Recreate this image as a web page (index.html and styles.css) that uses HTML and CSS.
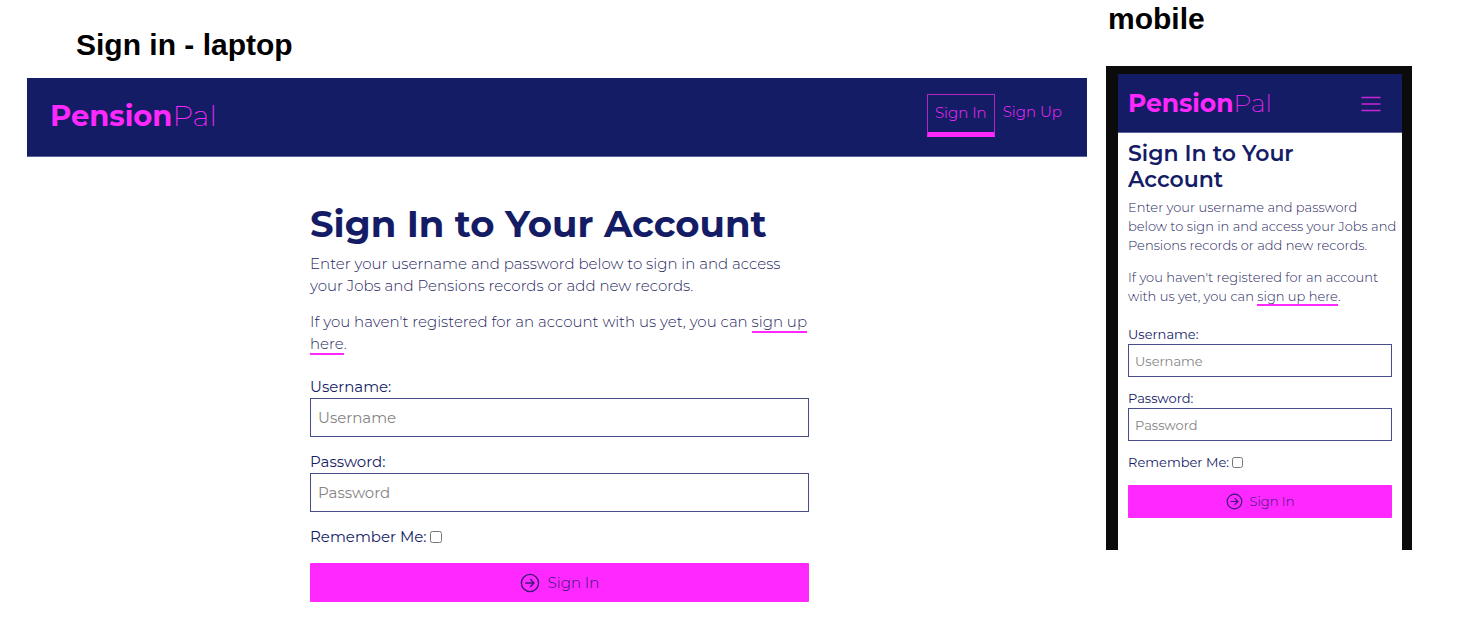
FILE: index.html
```html
<!DOCTYPE html>
<html lang="en">
<head>
<meta charset="utf-8">
<title>PensionPal – Sign In</title>
<link rel="stylesheet" href="styles.css">
</head>
<body>
<div class="board">
  <section class="laptop">
    <h2 class="caption">Sign in - laptop</h2>
    <header class="topbar">
      <a class="brand" href="#"><strong>Pension</strong><span>Pal</span></a>
      <nav class="nav">
        <a class="nav-link active" href="#">Sign In</a>
        <a class="nav-link" href="#">Sign Up</a>
      </nav>
    </header>
    <main class="content">
      <form class="form">
        <h1 class="title">Sign In to Your Account</h1>
        <p class="copy">Enter your username and password below to sign in and access your Jobs and Pensions records or add new records.</p>
        <p class="copy">If you haven't registered for an account with us yet, you can <a class="link" href="#">sign up here</a>.</p>
        <div class="field">
          <label for="l-user">Username:</label>
          <input class="input" id="l-user" type="text" placeholder="Username">
        </div>
        <div class="field">
          <label for="l-pass">Password:</label>
          <input class="input" id="l-pass" type="password" placeholder="Password">
        </div>
        <div class="remember">
          <label for="l-rem">Remember Me:</label>
          <input class="check" id="l-rem" type="checkbox">
        </div>
        <button class="submit" type="submit">
          <svg class="arrow" viewBox="0 0 20 20" aria-hidden="true"><circle cx="10" cy="10" r="8.6"/><path d="M5.8 10h8.2M10.6 6.6 14 10l-3.4 3.4"/></svg>
          Sign In
        </button>
      </form>
    </main>
  </section>
  <section class="mobile">
    <h2 class="caption">mobile</h2>
    <div class="device">
      <div class="screen">
        <header class="topbar">
          <a class="brand" href="#"><strong>Pension</strong><span>Pal</span></a>
          <button class="menu" type="button" aria-label="Menu">
            <svg viewBox="0 0 20 16" aria-hidden="true"><path d="M.5 1.5h19M.5 8h19M.5 14.5h19"/></svg>
          </button>
        </header>
        <form class="form">
          <h1 class="title">Sign In to Your Account</h1>
          <p class="copy">Enter your username and password below to sign in and access your Jobs and Pensions records or add new records.</p>
          <p class="copy">If you haven't registered for an account with us yet, you can <a class="link" href="#">sign up here</a>.</p>
          <div class="field">
            <label for="m-user">Username:</label>
            <input class="input" id="m-user" type="text" placeholder="Username">
          </div>
          <div class="field">
            <label for="m-pass">Password:</label>
            <input class="input" id="m-pass" type="password" placeholder="Password">
          </div>
          <div class="remember">
            <label for="m-rem">Remember Me:</label>
            <input class="check" id="m-rem" type="checkbox">
          </div>
          <button class="submit" type="submit">
            <svg class="arrow" viewBox="0 0 20 20" aria-hidden="true"><circle cx="10" cy="10" r="8.6"/><path d="M5.8 10h8.2M10.6 6.6 14 10l-3.4 3.4"/></svg>
            Sign In
          </button>
        </form>
      </div>
    </div>
  </section>
</div>
</body>
</html>
```

FILE: styles.css
```css
:root {
  --navy: #151c66;
  --pink: #ff28ff;
}

* {
  box-sizing: border-box;
}

body {
  margin: 0;
  background: #fff;
  color: var(--navy);
  font-family: Montserrat, Inter, sans-serif;
}

h1, h2, p {
  margin: 0;
}

a {
  color: inherit;
  text-decoration: none;
}

.board {
  display: grid;
  grid-template-columns: 1060fr 306fr;
  column-gap: 19px;
  align-items: start;
  padding: 0 56px 0 27px;
}

.caption {
  color: #000;
  font: bold 30px/36px "Liberation Sans", Arial, sans-serif;
}

.topbar {
  display: flex;
  justify-content: space-between;
  background: var(--navy);
  color: var(--pink);
}

.brand strong {
  font-weight: 700;
}

.brand span {
  font-weight: 200;
}

.nav {
  display: flex;
  align-items: flex-start;
  font-size: 15px;
  font-weight: 300;
  line-height: 20px;
}

.nav-link {
  padding: 8px;
}

.nav-link.active {
  border: 1px solid #b524c4;
  border-bottom: 5px solid var(--pink);
  padding: 8px 7px 9px;
}

.form {
  display: flex;
  flex-direction: column;
}

.copy {
  color: #1f2760;
  font-weight: 300;
}

.link {
  border-bottom: 2px solid var(--pink);
}

.field {
  display: flex;
  flex-direction: column;
}

.input {
  width: 100%;
  border: 1px solid #474d8a;
  border-radius: 0;
  background: #fff;
  color: var(--navy);
  font: inherit;
}

.input::placeholder {
  color: #858585;
  opacity: 1;
}

.remember {
  display: flex;
  align-items: center;
  gap: 3px;
}

.check {
  margin: 0;
}

.submit {
  display: flex;
  align-items: center;
  justify-content: center;
  border: 0;
  border-radius: 1px;
  padding: 0;
  background: var(--pink);
  color: #2b1a70;
  font: inherit;
  font-weight: 300;
}

.arrow {
  fill: none;
  stroke: #3b1a78;
  stroke-width: 1.4;
  stroke-linecap: round;
  stroke-linejoin: round;
}

.laptop .caption {
  padding: 27px 0 15px 49px;
}

.laptop .topbar {
  padding: 16px 17px 18px 23px;
  border-bottom: 1px solid #5c6196;
}

.laptop .brand {
  font-size: 29px;
  line-height: 44px;
}

.laptop .content {
  display: grid;
  grid-template-columns: 283fr 499fr 278fr;
  padding-top: 43px;
}

.laptop .form {
  grid-column: 2;
  font-size: 15px;
  line-height: 22px;
}

.laptop .title {
  margin-bottom: 5px;
  font-size: 37px;
  font-weight: 700;
  line-height: 48px;
  white-space: nowrap;
}

.laptop .copy {
  margin-bottom: 14px;
}

.laptop .field {
  margin-top: 7px;
  margin-bottom: 7px;
}

.laptop .input {
  height: 39px;
  padding: 0 7px;
}

.laptop .remember {
  margin-top: 7px;
  margin-bottom: 15px;
}

.laptop .check {
  width: 12px;
  height: 12px;
}

.laptop .submit {
  height: 39px;
  gap: 8px;
}

.laptop .arrow {
  width: 20px;
  height: 20px;
}

.mobile .caption {
  padding: 1px 0 29px 2px;
}

.device {
  padding: 8px 10px 0 12px;
  background: #0b0b0b;
}

.screen {
  min-height: 476px;
  background: #fff;
}

.mobile .topbar {
  align-items: center;
  padding: 12px 21px 11px 10px;
  border-bottom: 1px solid #5c6196;
}

.mobile .brand {
  font-size: 25px;
  line-height: 35px;
}

.menu {
  width: 20px;
  height: 16px;
  border: 0;
  padding: 0;
  background: none;
}

.menu svg {
  display: block;
  fill: none;
  stroke: #c926d6;
  stroke-width: 1.6;
}

.mobile .form {
  padding: 8px 10px 0;
  font-size: 13px;
  line-height: 19px;
}

.mobile .title {
  margin-bottom: 5px;
  font-size: 22px;
  font-weight: 600;
  line-height: 26px;
}

.mobile .copy {
  margin-right: -6px;
  margin-bottom: 13px;
}

.mobile .field {
  margin-top: 6px;
  margin-bottom: 6px;
}

.mobile .input {
  height: 33px;
  padding: 0 6px;
}

.mobile .remember {
  margin-top: 6px;
  margin-bottom: 13px;
}

.mobile .check {
  width: 11px;
  height: 11px;
}

.mobile .submit {
  height: 33px;
  gap: 7px;
}

.mobile .arrow {
  width: 17px;
  height: 17px;
}
```
